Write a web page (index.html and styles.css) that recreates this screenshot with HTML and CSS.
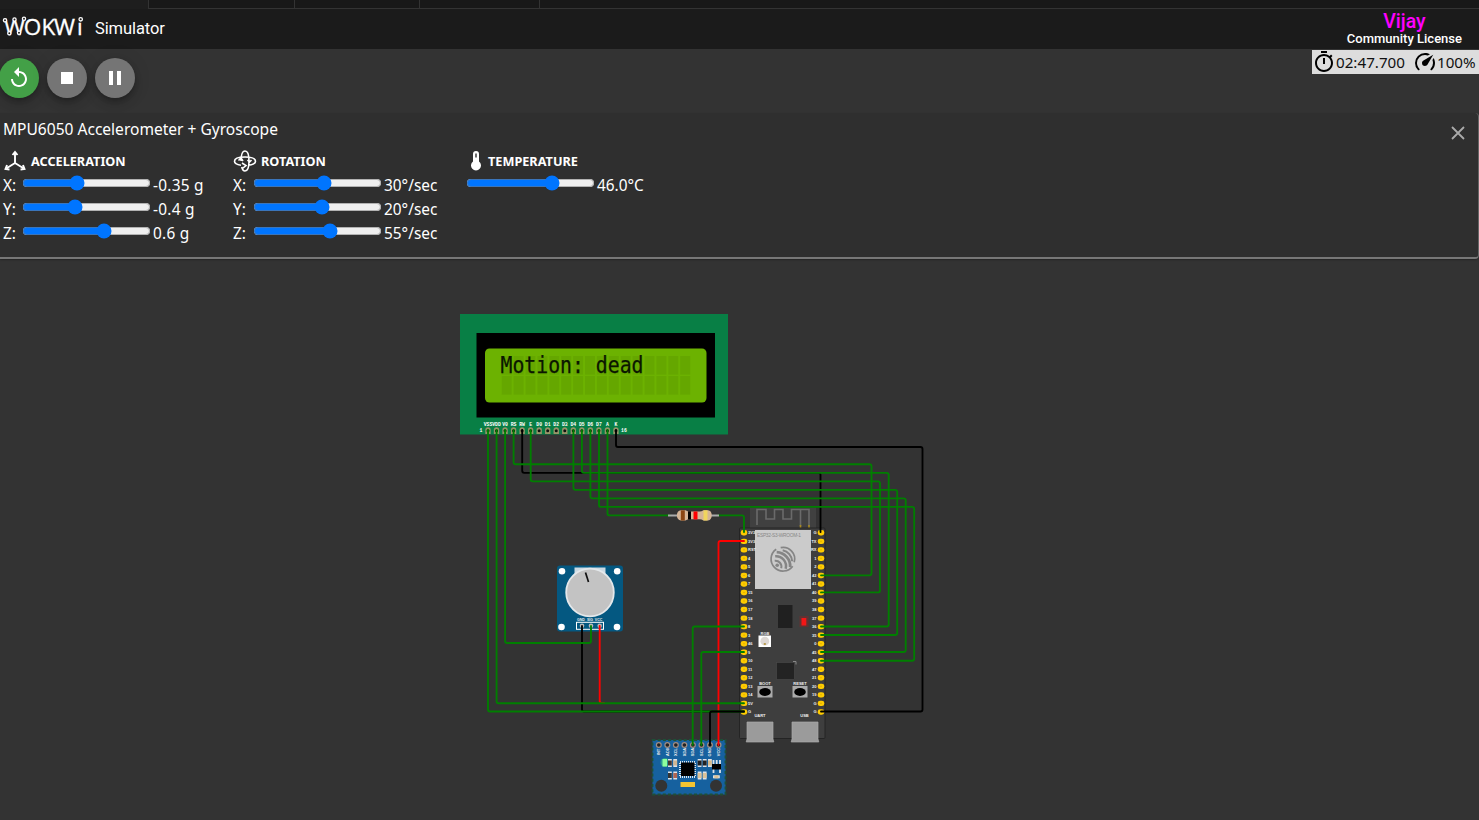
FILE: index.html
```html
<!DOCTYPE html>
<html lang="en">
<head>
<meta charset="utf-8">
<title>Wokwi Simulator</title>
<link rel="stylesheet" href="styles.css">
</head>
<body>
<div class="tabs"><span class="tab tab-active"></span><span class="tab tab-b"></span><span class="tab tab-c"></span><span class="tab tab-d"></span><span class="tab tab-rest"></span></div>
<header class="header">
  <svg class="logo" width="84" height="36" viewBox="0 9 84 36" role="img" aria-label="Wokwi">
    <text class="logo-text" y="34.500"><tspan x="4" textLength="21" lengthAdjust="spacingAndGlyphs">W</tspan><tspan x="23.800">O</tspan><tspan x="41.500">K</tspan><tspan x="54" textLength="21" lengthAdjust="spacingAndGlyphs">W</tspan><tspan x="77">ı</tspan></text>
    <g class="logo-rings"><circle cx="5" cy="20.300" r="1.600"/><circle cx="14.500" cy="19.500" r="1.600"/><circle cx="24" cy="18.800" r="1.600"/><circle cx="9.300" cy="33.200" r="1.600"/><circle cx="19" cy="32.700" r="1.600"/><circle cx="80.700" cy="19.300" r="1.700"/></g>
  </svg>
  <span class="app-name">Simulator</span>
  <div class="account"><span class="user">Vijay</span><span class="license">Community License</span></div>
</header>
<div class="toolbar">
  <button class="btn btn-go" aria-label="Restart"><svg width="24" height="24" viewBox="0 0 24 24"><path d="M12 5V1L7 6l5 5V7c3.31 0 6 2.69 6 6s-2.69 6-6 6-6-2.69-6-6H4c0 4.42 3.58 8 8 8s8-3.58 8-8-3.58-8-8-8z"/></svg></button>
  <button class="btn" aria-label="Stop"><svg width="24" height="24" viewBox="0 0 24 24"><path d="M6 6h12v12H6z"/></svg></button>
  <button class="btn" aria-label="Pause"><svg width="24" height="24" viewBox="0 0 24 24"><path d="M6 19h4V5H6v14zm8-14v14h4V5h-4z"/></svg></button>
  <div class="status">
    <svg width="24" height="24" viewBox="0 0 24 24"><path d="M15 1H9v2h6V1zm-4 13h2V8h-2v6zm8.03-6.61 1.42-1.42c-.43-.51-.9-.99-1.41-1.41l-1.42 1.42C16.07 4.74 14.12 4 12 4c-4.97 0-9 4.03-9 9s4.02 9 9 9 9-4.03 9-9c0-2.12-.74-4.07-1.97-5.61zM12 20c-3.87 0-7-3.13-7-7s3.13-7 7-7 7 3.13 7 7-3.13 7-7 7z"/></svg>
    <span class="clock">02:47.700</span>
    <svg width="24" height="24" viewBox="0 0 24 24"><path d="M12 16a3 3 0 0 1-3-3c0-1.120.61-2.100 1.500-2.610l9.710-5.620-5.530 9.580C14.170 15.330 13.160 16 12 16M12 3c1.810 0 3.500.5 4.970 1.320l-2.100 1.210C14 5.190 13 5 12 5a8 8 0 0 0-8 8c0 2.210.89 4.210 2.340 5.650h.01c.39.39.39 1.020 0 1.410s-1.030.39-1.420.010A9.970 9.970 0 0 1 2 13 10 10 0 0 1 12 3m10 10c0 2.760-1.120 5.260-2.930 7.070-.39.380-1.020.380-1.410-.010a1 1 0 0 1 0-1.410A7.950 7.950 0 0 0 20 13c0-1-.19-2-.54-2.900L20.670 8C21.500 9.500 22 11.180 22 13"/></svg>
    <span>100%</span>
  </div>
</div>
<section class="panel">
  <div class="panel-head"><span>MPU6050 Accelerometer + Gyroscope</span>
    <svg class="close" width="14" height="14" viewBox="0 0 14 14"><path d="M1 1l12 12M13 1L1 13"/></svg></div>
  <div class="groups">
    <div class="group group-acc">
      <h2 class="title"><svg width="24" height="22" viewBox="0 0 24 22"><path class="line" d="M12 13V3M12 13l-8 5M12 13l8 5M9.500 5L12 2l2.500 3M6.500 19.500L2.500 19l1.500-4M17.500 19.500l4-.5L20 15"/></svg><span>ACCELERATION</span></h2>
      <label class="row"><span class="axis">X:</span><input type="range" min="-2" max="2" step="0.01" value="-0.35"><span>-0.35 g</span></label>
      <label class="row"><span class="axis">Y:</span><input type="range" min="-2" max="2" step="0.01" value="-0.4"><span>-0.4 g</span></label>
      <label class="row"><span class="axis">Z:</span><input type="range" min="-2" max="2" step="0.01" value="0.62"><span>0.6 g</span></label>
    </div>
    <div class="group group-rot">
      <h2 class="title"><svg width="24" height="22" viewBox="0 0 24 22"><path class="thin" d="M8 15.200C4 14.600 1.500 13 1.500 11.200 1.500 8.500 6 7 12 7s10.500 1.500 10.500 4.200c0 2.200-3 3.500-7 4M8 11c0-6 1.500-10 4-10s4 4 4 10-1.500 10-4 10c-1.500 0-2.700-1.500-3.300-4M5.500 10.500L8 8l2 3M9 13l4 2.500-3.500 3M14.500 10l2 2 2-2"/></svg><span>ROTATION</span></h2>
      <label class="row"><span class="axis">X:</span><input type="range" min="-250" max="250" value="28"><span>30°/sec</span></label>
      <label class="row"><span class="axis">Y:</span><input type="range" min="-250" max="250" value="20"><span>20°/sec</span></label>
      <label class="row"><span class="axis">Z:</span><input type="range" min="-250" max="250" value="54"><span>55°/sec</span></label>
    </div>
    <div class="group">
      <h2 class="title title-temp"><svg width="14" height="22" viewBox="0 0 14 22"><path fill-rule="evenodd" d="M4 4a3 3 0 0 1 6 0v7.500a5 5 0 1 1-6 0zM6.300 3.500v4h1.400v-4z"/></svg><span>TEMPERATURE</span></h2>
      <label class="row"><input type="range" min="-40" max="85" value="46"><span>46.0°C</span></label>
    </div>
  </div>
</section>
<main class="stage">
<svg class="diagram" width="1479" height="560" viewBox="0 260 1479 560">
  <!-- LCD1602 -->
  <rect x="460" y="314" width="268" height="120.500" fill="#087f45"/>
  <rect x="476.500" y="333" width="238.500" height="84.500"/>
  <rect x="485" y="348.500" width="221.500" height="54" rx="4.500" fill="#6cb201"/>
  <g id="cells" fill="#000" fill-opacity=".06"></g>
  <text class="lcd" x="500.500" y="373" textLength="143" lengthAdjust="spacingAndGlyphs">Motion: dead</text>
  <g id="lcd-pins"></g>
  <text class="silk" x="481" y="432">1</text><text class="silk" x="624" y="432">16</text>

  <!-- ESP32-S3 board -->
  <rect x="750" y="507.500" width="66" height="22" fill="#404040"/>
  <path d="M757 525V509.500h9V519h8.500v-9.500h8.500V519h8.500v-9.500h17.500V526M800.500 510v16" fill="none" stroke="#6a6a6a" stroke-width="1.600"/>
  <path d="M800.500 525v3M809 525v3" stroke="#a98a20" stroke-width="1.600"/>
  <rect x="739.500" y="528" width="85.500" height="210.500" rx="1" fill="#3e3e3e" stroke="#242424"/>
  <rect x="755" y="530" width="56" height="59" fill="#cbcbcb"/>
  <text class="module" x="757" y="537" textLength="44">ESP32-S3-WROOM-1</text>
  <g transform="translate(782.700 559.200)" fill="none" stroke="#858585">
    <path d="M-6.500 -10A12 12 0 1 0 10 7" stroke-width="1.700"/>
    <path d="M-2 -11.500A11.500 11.500 0 0 1 11.500 3" stroke-width="1.700"/>
    <path d="M-6 -7A14 14 0 0 1 7.500 8" stroke-width="2.800"/>
    <path d="M-7.500 -3A10 10 0 0 1 3 9.500" stroke-width="2.500"/>
    <path d="M0 -9A12 12 0 0 1 9.500 2" stroke-width="2"/>
    <path d="M-8 1.500A6 6 0 0 1-1.500 9" stroke-width="2"/>
    <circle cx="-5.500" cy="6" r="1.800" fill="#858585" stroke="none"/>
  </g>
  <rect x="778" y="605" width="14.500" height="23" fill="#202020"/>
  <rect x="801.500" y="618" width="4.800" height="7.500" fill="#f21b1b"/><rect x="799.500" y="616" width="9" height="11" fill="#f00" opacity=".18"/>
  <text class="tiny" x="765" y="635">RGB</text>
  <rect x="758.500" y="635.500" width="12.500" height="11.500" fill="#fff"/><circle cx="764.800" cy="641.200" r="4.400" fill="#ded8d4"/><rect x="763.800" y="643" width="2" height="2" fill="#b79b4e"/>
  <rect x="776.500" y="662.500" width="18" height="17" fill="#232323" stroke="#4b4b4b" stroke-width=".6"/><path d="M793 661.500h3v3" fill="none" stroke="#888"/>
  <text class="tiny" x="765" y="685">BOOT</text><text class="tiny" x="800" y="685">RESET</text>
  <rect x="757.500" y="686" width="15" height="11.500" fill="#aaa"/><ellipse cx="765" cy="692" rx="5.800" ry="3.900"/>
  <rect x="792.500" y="686" width="15" height="11.500" fill="#aaa"/><ellipse cx="800" cy="692" rx="5.800" ry="3.900"/>
  <text class="tiny" x="760" y="717">UART</text><text class="tiny" x="804.500" y="717">USB</text>
  <path d="M747 722h26v17l.8 3h-27.600l.8-3zM792 722h26v17l.8 3h-27.600l.8-3z" fill="#9b9b9b" stroke="#aaa" stroke-width=".7"/>
  <g id="esp-pins"></g>

  <!-- Potentiometer -->
  <rect x="557" y="565.500" width="66" height="66" rx="3" fill="#045881"/>
  <g fill="#fff"><circle cx="562" cy="571.300" r="3.300"/><circle cx="617.200" cy="571.300" r="3.300"/><circle cx="561.500" cy="627" r="3.300"/><circle cx="617" cy="627" r="3.300"/></g>
  <rect x="574.500" y="567.500" width="31" height="14" fill="#ccdae3"/>
  <circle cx="590" cy="592.500" r="23.800" fill="#c3c3c3" stroke="#e4e8eb" stroke-width="1.800"/>
  <path d="M585.500 572.500l3 9.500" stroke="#111" stroke-width="1.700"/>
  <text class="tiny pot" x="581" y="621.300">GND</text><text class="tiny pot" x="590" y="621.300">SIG</text><text class="tiny pot" x="598.500" y="621.300">VCC</text>
  <rect x="576.500" y="622.300" width="27" height="7" fill="none" stroke="#fff"/>
  <g fill="#b9b9b9"><circle cx="582" cy="625.700" r="2.300"/><circle cx="591" cy="625.700" r="2.300"/><circle cx="599.700" cy="625.700" r="2.300"/></g>

  <!-- MPU6050 -->
  <rect x="652.500" y="740" width="73" height="54.500" fill="#16619f" stroke="#1e5038" stroke-width="1.800" stroke-dasharray="3 2.200"/>
  <g id="mpu-pins"></g>
  <g fill="#333"><circle cx="661.300" cy="785.800" r="6"/><circle cx="716" cy="785.800" r="6"/></g>
  <rect x="680.500" y="782" width="14.500" height="5" fill="#f5c431"/>
  <circle cx="665" cy="762.500" r="4.500" fill="#4cff74" opacity=".35"/><rect x="662.500" y="759" width="4.500" height="7.500" fill="#8dff9d"/>
  <rect x="680" y="762" width="15" height="15" fill="none" stroke="#e0e8ef" stroke-width="2" stroke-dasharray="1 1"/><rect x="681" y="762.500" width="13.500" height="13.500"/>
  <g id="mpu-parts"></g>
  <path d="M713.500 760v13M716.700 760v4M720 760v13" stroke="#dce2e8" stroke-width="1.800"/><rect x="712" y="764" width="9" height="5.500"/>

  <!-- Wires -->
  <g class="wires wires-black">
    <path d="M522.200 430V470.800q0 2 2 2H818.500q2 0 2 2V532"/>
    <path d="M616 430V445q0 2 2 2H920.500q2 0 2 2V709.500q0 2-2 2H821"/>
    <path d="M582 626V709.500q0 2 2 2H744"/>
  </g>
  <g class="wires wires-red">
    <path d="M599.700 626V701q0 2 2 2H604"/><path d="M718.500 745V543q0-2 2-2H744"/>
  </g>
  <g class="wires wires-green">
    <path d="M488 430V709.500q0 2 2 2H744"/><path d="M496.600 430V701.200q0 2 2 2H744"/>
    <path d="M505.100 430V641q0 2 2 2H589q2 0 2-2V626"/>
    <path d="M513.600 430V462.200q0 2 2 2H869.500q2 0 2 2V573.300q0 2-2 2H821"/>
    <path d="M530.700 430V479.300q0 2 2 2H878q2 0 2 2V590.400q0 2-2 2H821"/>
    <path d="M573.400 430V487.800q0 2 2 2H895.200q2 0 2 2V633q0 2-2 2H821"/>
    <path d="M581.900 430V470.800q0 2 2 2H886.700q2 0 2 2V624.500q0 2-2 2H821"/>
    <path d="M590.400 430V496.300q0 2 2 2H903.700q2 0 2 2V650q0 2-2 2H821"/>
    <path d="M599 430V504.900q0 2 2 2H912.200q2 0 2 2V658.700q0 2-2 2H821"/>
    <path d="M607.500 430V513.400q0 2 2 2H670M718 515.400H742q2 0 2 2V532"/>
    <path d="M692.700 745V628.500q0-2 2-2H744"/><path d="M701.300 745V654q0-2 2-2H744"/>
  </g>
  <g class="wires wires-black"><path d="M710 745V713.500q0-2 2-2H744"/></g>

  <!-- Resistor -->
  <path d="M668 515.400h51" stroke="#aaa" stroke-width="2"/>
  <path d="M681 510.300h4.500q2 1.300 4 1.300h10q2 0 4-1.300h4.500c5 0 5 10.200 0 10.200h-4.500q-2-1.300-4-1.300h-10q-2 0-4 1.300H681c-5.500 0-5.500-10.200 0-10.200z" fill="#d5b597"/>
  <path d="M680.800 510.300h4v10.200h-4z" fill="#8a4513"/><path d="M688 511.300h3v8.200h-3z"/><path d="M693.500 511.500h4v7.900h-4z" fill="#f00"/><path d="M703.500 510.300h4v10.200h-4z" fill="#f1d55d"/>
</svg>
</main>
<script src="board.js"></script>
</body>
</html>
```
FILE: styles.css
```css
* { box-sizing: border-box; }
body { margin: 0; width: 1479px; height: 820px; overflow: hidden; background: #333; color: #fff; font: 16px "Noto Sans", "Open Sans", sans-serif; display: flex; flex-direction: column; }
.tabs { display: flex; height: 9px; flex: none; background: #181818; }
.tab { border-right: 1px solid #333; border-bottom: 1px solid #333; }
.tab-active { width: 149px; background: #1e1e1e; border-bottom: 0; }
.tab-b { width: 146px; }
.tab-c { width: 125px; }
.tab-d { width: 120px; }
.tab-rest { flex: 1; border-right: 0; }
.header { height: 40px; flex: none; background: #1b1b1b; display: flex; align-items: flex-start; font-family: Roboto, sans-serif; }
.logo { overflow: visible; }
.logo-text { font: 500 22.500px "Open Sans", sans-serif; fill: #fff; stroke: #fff; stroke-width: .3; }
.logo-rings circle { fill: #1b1b1b; stroke: #fff; stroke-width: 1.300; }
.app-name { margin: 10px 0 0 11px; font-size: 16.500px; line-height: 20px; letter-spacing: -.1px; }
.account { margin: 2px 17px 0 auto; display: flex; flex-direction: column; align-items: center; }
.user { color: #f0f; font-size: 19.500px; line-height: 21px; font-weight: 500; }
.license { font-size: 13px; line-height: 14px; font-weight: 500; }
.toolbar { height: 64px; flex: none; display: flex; gap: 8px; padding-top: 9px; margin-left: -1px; }
.btn { width: 40px; height: 40px; border: 0; border-radius: 50%; padding: 0; display: grid; place-items: center; background: #757575; box-shadow: 0 3px 5px -1px rgba(0,0,0,.2), 0 6px 10px rgba(0,0,0,.14), 0 1px 18px rgba(0,0,0,.12); }
.btn svg { fill: #fff; }
.btn-go { background: #43a047; }
.status { margin: -8px 0 0 auto; width: 167px; height: 24px; background: #ddd; color: #111; display: flex; align-items: center; font-size: 15.200px; }
.status svg { flex: none; }
.clock { width: 77px; }
.panel { height: 146px; flex: none; background: #2f2f2f; border-bottom: 2px solid #777; border-right: 1px solid #666; border-radius: 0 4px 4px 0; padding: 5px 13px 0 3px; box-shadow: 0 1px 2px rgba(0,0,0,.3); }
.panel-head { display: flex; justify-content: space-between; height: 30px; line-height: 23px; font-size: 15.550px; }
.close { margin-top: 8px; fill: none; stroke: #aaa; stroke-width: 1.800; }
.groups { display: flex; }
.group-acc { width: 230px; }
.group-rot { width: 233px; }
.title { display: flex; gap: 4px; align-items: center; height: 24px; margin: 0; font-size: 12.700px; line-height: 24px; font-weight: 700; }
.title svg { fill: #fff; margin-top: 1px; }
.title span { padding-top: 1px; }
.title-temp { gap: 5px; padding-left: 3px; }
.line { fill: none; stroke: #fff; stroke-width: 1.900; }
.thin { fill: none; stroke: #fff; stroke-width: 1.600; }
.row { display: flex; align-items: flex-start; height: 24px; line-height: 28px; font-size: 15.400px; white-space: nowrap; }
.row input { flex: none; width: 129px; height: 16px; margin: 3px 2px 0 0; }
.axis { width: 19px; }
.group-acc .row span:last-child { letter-spacing: .25px; }
.group-rot .axis { width: 20px; }
.stage { flex: 1; min-height: 0; }
.diagram { display: block; margin-top: 1px; }
.lcd { font: 22.500px "DejaVu Sans Mono", monospace; fill: #0b1600; stroke: #0b1600; stroke-width: .25; }
.silk { font: 700 4.800px "Liberation Mono", monospace; fill: #fff; text-anchor: middle; }
.module { font: 4.800px "Liberation Sans", sans-serif; fill: #888; }
.tiny { font: 700 4px "Liberation Sans", sans-serif; fill: #eee; text-anchor: middle; }
.pot { font-size: 3.500px; }
.end { text-anchor: end; }
.start { text-anchor: start; }
.wires { fill: none; stroke-width: 1.850; stroke-linecap: round; }
.wires-black { stroke: #000; }
.wires-red { stroke: #f00; }
.wires-green { stroke: #007f00; }
```
FILE: board.js
```js
const NS = 'http://www.w3.org/2000/svg';
const PITCH = 8.53;

function add(parent, tag, attrs, text) {
  const el = document.createElementNS(NS, tag);
  for (const key in attrs) el.setAttribute(key, attrs[key]);
  if (text) el.textContent = text;
  parent.appendChild(el);
}

const cells = document.getElementById('cells');
for (let row = 0; row < 2; row++)
  for (let col = 0; col < 16; col++)
    add(cells, 'rect', { x: 501.7 + col * 11.9, y: 356 + row * 20, width: 10, height: 18.7 });

const lcd = document.getElementById('lcd-pins');
'VSS VDD V0 RS RW E D0 D1 D2 D3 D4 D5 D6 D7 A K'.split(' ').forEach((name, i) => {
  const x = 488 + i * PITCH;
  add(lcd, 'path', { d: `M${x - 2.7} 434v-4a2.700 2.700 0 0 1 5.400 0v4z`, fill: '#969568' });
  add(lcd, 'circle', { cx: x, cy: 430.7, r: 1.5, fill: '#111' });
  add(lcd, 'text', { x, y: 426, class: 'silk' }, name);
});

const esp = document.getElementById('esp-pins');
const sides = [
  [744, 748, 'start', '3V3 3V3 RST 4 5 6 7 15 16 17 18 8 3 46 9 10 11 12 13 14 5V G'],
  [821, 816.5, 'end', 'G TX RX 1 2 42 41 40 39 38 37 36 35 0 45 48 47 21 20 19 G G']
];
for (const [x, labelX, cls, names] of sides)
  names.split(' ').forEach((name, i) => {
    const y = 532.8 + i * PITCH;
    add(esp, 'rect', { x: x - 3.3, y: y - 2.7, width: 6.6, height: 5.4, rx: 2.4, fill: '#fc0' });
    add(esp, 'circle', { cx: x, cy: y, r: .8, fill: '#e0b000' });
    add(esp, 'text', { x: labelX, y: y + 1.4, class: 'tiny ' + cls }, name);
  });

const mpu = document.getElementById('mpu-pins');
'INT AD0 XCL XDA SDA SCL GND VCC'.split(' ').forEach((name, i) => {
  const x = 658.8 + i * PITCH;
  add(mpu, 'circle', { cx: x, cy: 745, r: 2.4, fill: '#222', stroke: '#a08e85', 'stroke-width': 1.2 });
  add(mpu, 'text', { transform: `translate(${x + 1.4} 752) rotate(-90)`, class: 'tiny' }, name);
});

// Surface-mount parts: left, top, body colour, with a light terminal at each end.
const parts = document.getElementById('mpu-parts');
[[668, 759, '#45352d'], [673.3, 759, '#cfb693'], [668, 771.5, '#333'], [673.3, 771.5, '#ad6653'],
 [697.7, 759, '#222'], [702.8, 759, '#222'], [708, 759, '#d6bb8e'], [697.7, 771.5, '#dcc298'],
 [702.8, 771.5, '#dcc298']].forEach(([x, y, fill]) => {
  add(parts, 'rect', { x, y, width: 3.8, height: 8, fill: '#dce2e8' });
  add(parts, 'rect', { x, y: y + 1.5, width: 3.8, height: 5, fill });
});
add(parts, 'rect', { x: 713, y: 775.3, width: 6.8, height: 3, fill: '#dce2e8' });
add(parts, 'rect', { x: 714.3, y: 775.3, width: 4.2, height: 3, fill: '#dcc298' });
```
